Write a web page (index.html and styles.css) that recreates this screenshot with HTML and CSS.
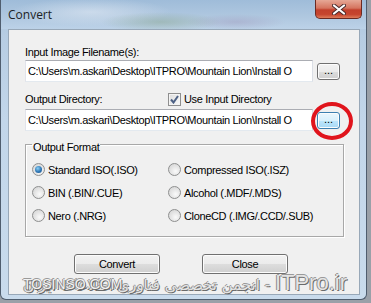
FILE: index.html
```html
<!DOCTYPE html>
<html>
<head>
<meta charset="utf-8">
<link rel="stylesheet" href="styles.css">
</head>
<body>
<div class="window">
  <div class="titlebar">
    <span class="title">Convert</span>
    <div class="close">
      <svg width="14" height="11" viewBox="0 0 14 11"><path d="M2 1.5 L12 9.5 M12 1.5 L2 9.5" stroke="#4a2a2a" stroke-width="4" stroke-linecap="round"/><path d="M2 1.5 L12 9.5 M12 1.5 L2 9.5" stroke="#ffffff" stroke-width="2.2" stroke-linecap="round"/></svg>
    </div>
  </div>
  <div class="client">
    <div class="label first">Input Image Filename(s):</div>
    <div class="row">
      <div class="textbox">C:\Users\m.askari\Desktop\ITPRO\Mountain Lion\Install O</div>
      <div class="browse">...</div>
    </div>
    <div class="row labelrow">
      <span class="label dirlabel">Output Directory:</span>
      <span class="check"><span class="box"><svg width="9" height="9" viewBox="0 0 9 9"><path d="M1 4.5 L3.5 7.5 L8 1" fill="none" stroke="#4d6185" stroke-width="2"/></svg></span>Use Input Directory</span>
    </div>
    <div class="row">
      <div class="textbox">C:\Users\m.askari\Desktop\ITPRO\Mountain Lion\Install O</div>
      <div class="browse hot">...</div>
    </div>
    <fieldset class="group">
      <legend>Output Format</legend>
      <div class="grid">
        <span class="opt"><span class="radio on"></span>Standard ISO(.ISO)</span>
        <span class="opt"><span class="radio"></span>Compressed ISO(.ISZ)</span>
        <span class="opt"><span class="radio"></span>BIN (.BIN/.CUE)</span>
        <span class="opt"><span class="radio"></span>Alcohol (.MDF/.MDS)</span>
        <span class="opt"><span class="radio"></span>Nero (.NRG)</span>
        <span class="opt"><span class="radio"></span>CloneCD (.IMG/.CCD/.SUB)</span>
      </div>
    </fieldset>
    <div class="buttons">
      <div class="btn">Convert</div>
      <div class="btn">Close</div>
    </div>
  </div>
  <span class="ring"></span>
  <span class="wm wm-fa" dir="rtl"><span class="wm-latin">ITPro.ir</span> - انجمن تخصصی فناوری اطلاعات ایران</span>
  <span class="wm wm-en">TOSINSO.COM</span>
</div>
</body>
</html>
```
FILE: styles.css
```css
html, body {
  margin: 0;
  padding: 0;
}
body {
  width: 371px;
  height: 303px;
  overflow: hidden;
  background: #9aa0a8;
  font-family: "Liberation Sans", Arial, sans-serif;
  font-size: 11px;
  letter-spacing: -0.35px;
  color: #000;
}
.window {
  position: relative;
  width: 367px;
  height: 300px;
  box-sizing: border-box;
  border: 1px solid #4f5d6e;
  border-top: none;
  border-radius: 0 0 6px 6px;
  background: linear-gradient(180deg, #a9c2dc 0%, #b7cde3 12%, #c2d6ea 40%, #c9dbec 100%);
  display: flex;
  flex-direction: column;
}
.titlebar {
  height: 29px;
  display: flex;
  align-items: flex-start;
  justify-content: space-between;
  background:
    radial-gradient(ellipse 60px 10px at 160px 22px, rgba(120,150,110,0.35), transparent),
    radial-gradient(ellipse 50px 8px at 235px 22px, rgba(150,130,170,0.3), transparent),
    radial-gradient(ellipse 80px 14px at 90px 12px, rgba(235,240,248,0.5), transparent),
    linear-gradient(180deg, #9fbcd9 0%, #b0c8e0 60%, #bcd2e8 100%);
}
.title {
  font-family: "Open Sans", "Noto Sans", sans-serif;
  font-size: 12px;
  letter-spacing: 0;
  color: #1a1f26;
  margin: 6px 0 0 7px;
}
.close {
  width: 47px;
  height: 19px;
  margin-right: 4px;
  box-sizing: border-box;
  border: 1px solid #6b2a22;
  border-top: none;
  border-radius: 0 0 5px 5px;
  background: linear-gradient(180deg, #e6a896 0%, #d5745f 45%, #c2402c 55%, #c6452e 80%, #de7b5a 100%);
  display: flex;
  align-items: center;
  justify-content: center;
}
.client {
  margin: 0 6px 0 7px;
  height: 266px;
  box-sizing: border-box;
  border: 1px solid #98a8b8;
  background: #f0f0f0;
  padding-left: 16px;
  display: flex;
  flex-direction: column;
}
.label {
  line-height: 13px;
  height: 13px;
}
.first {
  margin-top: 16px;
}
.row {
  display: flex;
  align-items: center;
  margin-top: 1px;
}
.textbox {
  width: 288px;
  height: 22px;
  box-sizing: border-box;
  background: #fff;
  border: 1px solid #abadb3;
  border-color: #abadb3 #dbdfe6 #e3e9ef #e2e3ea;
  line-height: 20px;
  padding-left: 2px;
  white-space: nowrap;
  overflow: hidden;
}
.browse {
  width: 23px;
  height: 17px;
  margin-left: 4px;
  box-sizing: border-box;
  border: 1px solid #707070;
  border-radius: 3px;
  background: linear-gradient(180deg, #f2f2f2 0%, #ebebeb 50%, #dddddd 51%, #cfcfcf 100%);
  box-shadow: inset 0 0 0 1px #fcfcfc;
  text-align: center;
  line-height: 13px;
  letter-spacing: 0;
}
.browse.hot {
  border-color: #3c7fb1;
  background: linear-gradient(180deg, #eaf6fd 0%, #d9f0fc 50%, #bee6fd 51%, #a7d9f5 100%);
}
.labelrow {
  margin-top: 11px;
  height: 13px;
}
.labelrow + .row {
  margin-top: 3px;
}
.dirlabel {
  width: 143px;
}
.check {
  display: flex;
  align-items: center;
  line-height: 13px;
}
.box {
  width: 13px;
  height: 13px;
  box-sizing: border-box;
  border: 1px solid #8f8f8f;
  background: linear-gradient(135deg, #dcdcdc, #fbfbfb);
  box-shadow: inset 0 0 0 1px #f4f4f4;
  margin-right: 3px;
  display: flex;
  align-items: center;
  justify-content: center;
}
.group {
  margin: 4px 0 0 0;
  width: 319px;
  box-sizing: border-box;
  padding: 4px 6px 9px 6px;
  border: 1px solid #a8a8a8;
  box-shadow: inset 1px 1px 0 #fff, 1px 1px 0 #fff;
  min-width: 0;
}
.group legend {
  padding: 6px 1px 0 1px;
  margin-left: 0;
  line-height: 13px;
}
.grid {
  display: grid;
  grid-template-columns: 136px 1fr;
  grid-auto-rows: 23px;
}
.opt {
  display: flex;
  align-items: center;
  white-space: nowrap;
}
.radio {
  width: 13px;
  height: 13px;
  box-sizing: border-box;
  border-radius: 50%;
  border: 1px solid #8e8f8f;
  background: radial-gradient(circle at 60% 65%, #fafafa 0%, #e6e6e6 45%, #d0d0d0 100%);
  margin-right: 3px;
  position: relative;
  flex: none;
}
.radio.on::after {
  content: "";
  position: absolute;
  left: 2px;
  top: 2px;
  width: 7px;
  height: 7px;
  border-radius: 50%;
  background: radial-gradient(circle at 40% 35%, #8ad0f6 0%, #2f76b4 55%, #1b4f88 100%);
}
.buttons {
  display: flex;
  gap: 42px;
  margin-top: 17px;
  padding-left: 49px;
}
.btn {
  width: 86px;
  height: 20px;
  box-sizing: border-box;
  border: 1px solid #707070;
  border-radius: 3px;
  background: linear-gradient(180deg, #f2f2f2 0%, #ebebeb 50%, #dddddd 51%, #cfcfcf 100%);
  box-shadow: inset 0 0 0 1px #fcfcfc;
  text-align: center;
  line-height: 18px;
}
.ring {
  position: absolute;
  left: 310px;
  top: 102px;
  width: 42px;
  height: 38px;
  box-sizing: border-box;
  border: 4px solid #e0141c;
  border-radius: 50%;
}
.wm {
  position: absolute;
  white-space: nowrap;
  letter-spacing: 0;
  color: #e4e4e4;
  text-shadow: 1px 1px 0 #6a6a6a, -1px 0 0 #8a8a8a, 0 -1px 0 #9a9a9a;
}
.wm-fa {
  right: 19px;
  top: 271px;
  direction: rtl;
  font-family: "DejaVu Sans", "Liberation Sans", sans-serif;
  font-size: 15px;
  line-height: 24px;
}
.wm-latin {
  font-family: "Liberation Sans", sans-serif;
  font-size: 22px;
}
.wm-en {
  left: 22px;
  top: 276px;
  font-family: "Liberation Sans", sans-serif;
  font-size: 14px;
  line-height: 16px;
  color: #f2f2f2;
}
```
